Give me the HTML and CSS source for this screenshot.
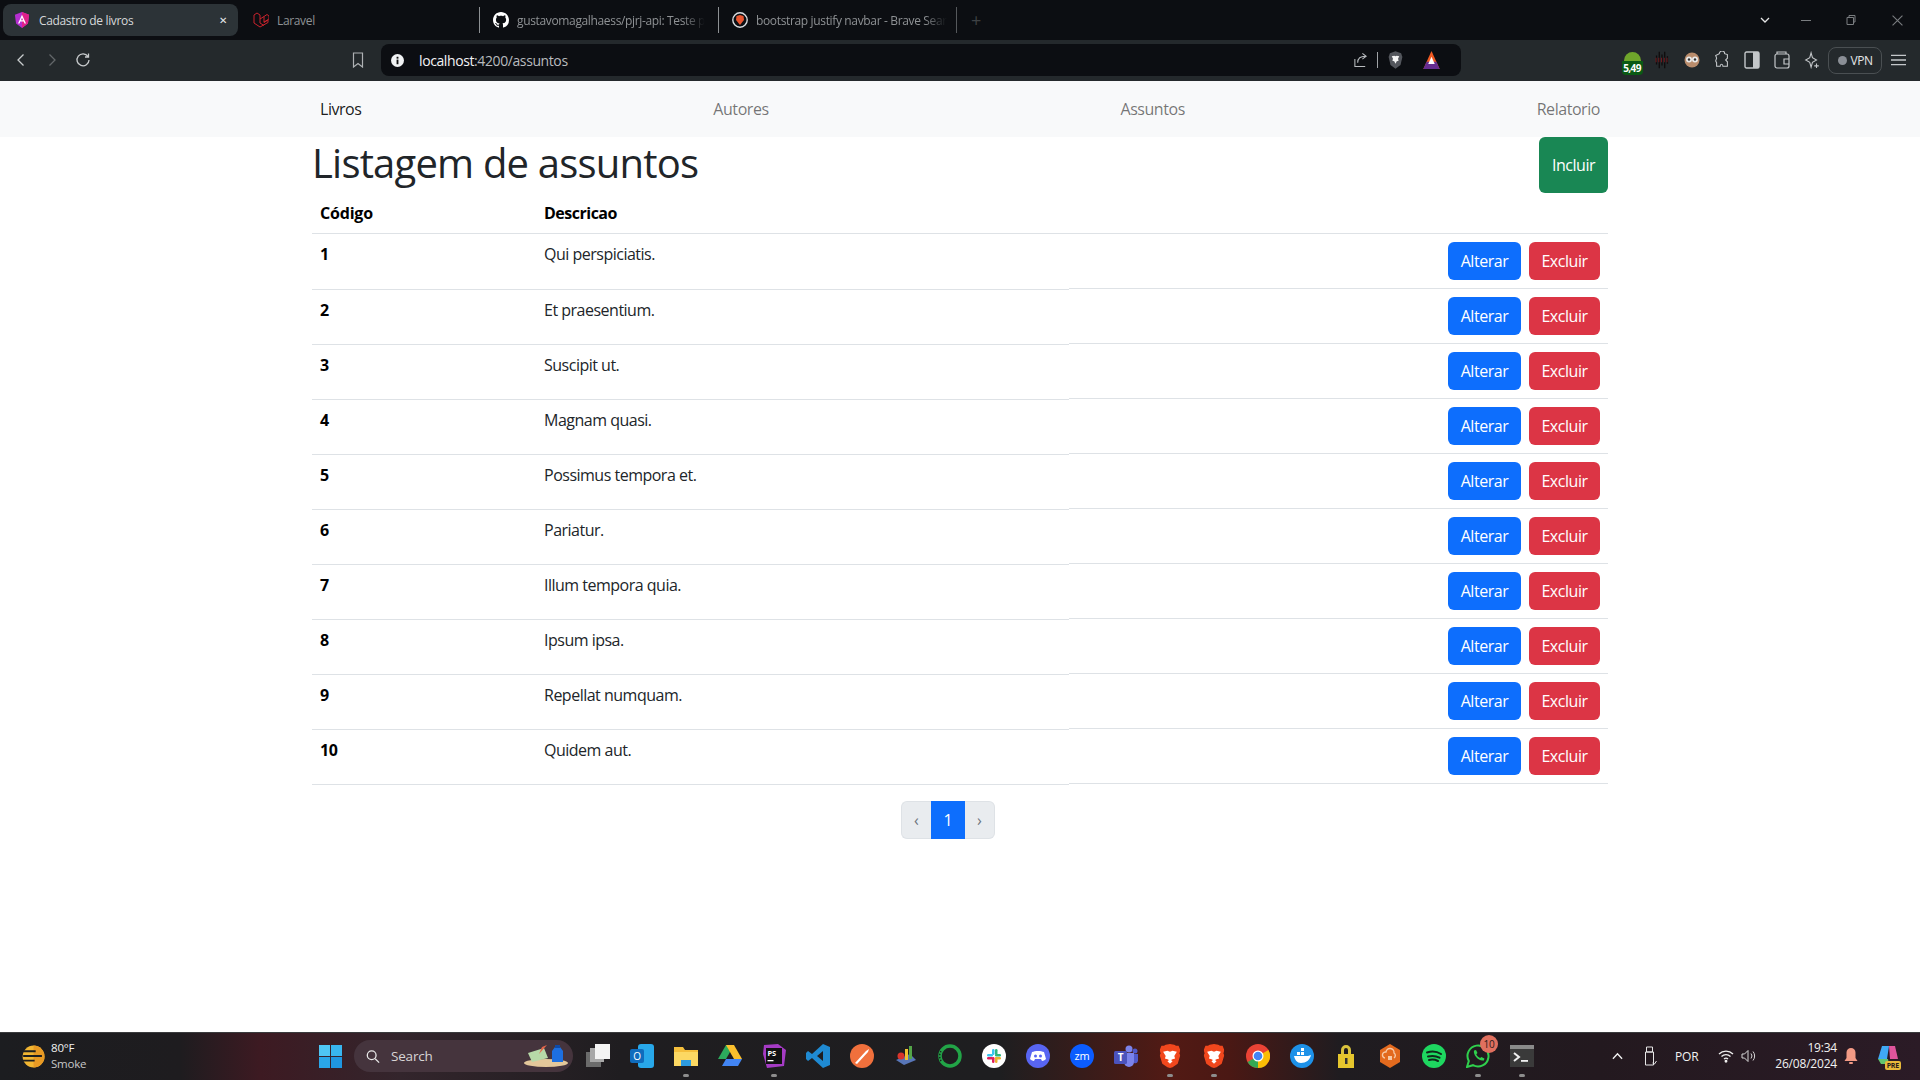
FILE: index.html
```html
<!DOCTYPE html>
<html lang="pt-BR">
<head>
    <meta charset="UTF-8">
    <meta name="viewport" content="width=device-width, initial-scale=1.0">
    <title>Cadastro de livros</title>
    <link rel="stylesheet" href="styles.css">
</head>
<body>

<svg class="defs" width="0" height="0">
    <defs>
        <symbol id="brave" viewBox="0 0 24 28">
            <path d="M12 0l5 1 2 1 3 0 2 5-1 4 1 2-3 10-6 4-3 1-3-1-6-4-3-10 1-2-1-4 2-5 3 0 2-1z" fill="#f1471d"/>
            <path d="M4 9l5-1 3 1 3-1 5 1-3 5 1 3-4 1-2 4-2-4-4-1 1-3z" fill="#fff"/>
            <path d="M9 20l3-2 3 2-3 3z" fill="#fff"/>
        </symbol>
    </defs>
</svg>

<div class="tabbar">
    <div class="tab tab-active">
        <svg class="tab-icon" viewBox="0 0 16 18"><path d="M8 0l8 3-1.300 10L8 18l-6.700-5L0 3z" fill="#b52ed0"/><path d="M8 0l8 3-1.300 10L8 18z" fill="#e0218a"/><path d="M8 3l4.500 10h-1.700l-.9-2.200H6.100L5.200 13H3.500zm0 3.500L6.800 9.400h2.400z" fill="#fff"/></svg>
        <span class="tab-title tab-grow">Cadastro de livros</span>
        <span class="tab-close">✕</span>
    </div>
    <div class="tab">
        <svg class="tab-icon" viewBox="0 0 16 16" fill="none" stroke="#c8232c" stroke-width="1"><path d="M1 3l3-2 3 2v8l4 2.500M1 3v8l6 4 8-4.500V8l-4 2.500M7 7l4-2.500M11 4.500v6M11 4.500l3-2 2 1.500v3l-5 3"/></svg>
        <span class="tab-title tab-dim">Laravel</span>
    </div>
    <div class="tab tab-sep">
        <svg class="tab-icon" viewBox="0 0 16 16"><path fill="#fff" d="M8 0C3.580 0 0 3.580 0 8c0 3.540 2.290 6.530 5.470 7.590.4.070.55-.17.55-.38 0-.19-.01-.82-.01-1.490-2.010.37-2.530-.49-2.690-.94-.09-.23-.48-.94-.82-1.130-.28-.15-.68-.52-.01-.53.63-.01 1.080.58 1.230.82.72 1.210 1.870.87 2.330.66.07-.52.28-.87.51-1.070-1.780-.2-3.640-.89-3.640-3.950 0-.87.31-1.590.82-2.150-.08-.2-.36-1.020.08-2.120 0 0 .67-.21 2.200.82.64-.18 1.320-.27 2-.27.68 0 1.360.09 2 .27 1.530-1.040 2.200-.82 2.200-.82.44 1.100.16 1.920.08 2.120.51.56.82 1.270.82 2.150 0 3.070-1.870 3.750-3.650 3.950.29.25.54.73.54 1.480 0 1.070-.01 1.930-.01 2.200 0 .21.15.46.55.38A8.013 8.013 0 0016 8c0-4.420-3.580-8-8-8z"/></svg>
        <span class="tab-title tab-dim tab-fade">gustavomagalhaess/pjrj-api: Teste p</span>
    </div>
    <div class="tab tab-sep tab-last">
        <svg class="tab-icon" viewBox="0 0 16 16"><circle cx="8" cy="8" r="7.200" fill="none" stroke="#d9dce0" stroke-width="1.400"/><path d="M8 3l3.500 1 .5 4-4 5-4-5 .5-4z" fill="#e8552f"/></svg>
        <span class="tab-title tab-dim tab-fade">bootstrap justify navbar - Brave Sear</span>
    </div>
    <span class="tab-plus">+</span>
    <div class="win-controls">
        <svg class="win-chevron" viewBox="0 0 10 6" fill="none" stroke="#e6e6e6" stroke-width="1.300"><path d="M1 1l4 4 4-4"/></svg>
        <span class="win-min"></span>
        <svg class="win-restore" viewBox="0 0 10 10" fill="none" stroke="#7a7d80" stroke-width="1"><path d="M1 2.500h6.500V9.500H1zM3 2.500V.5h6V7H7.500"/></svg>
        <svg class="win-x" viewBox="0 0 10 10" fill="none" stroke="#7a7d80" stroke-width="1"><path d="M.5.5l9 9M9.500.5l-9 9"/></svg>
    </div>
</div>

<div class="toolbar">
    <div class="tool-nav">
        <svg class="tool-btn" viewBox="0 0 16 16" fill="none" stroke="#c9ccce" stroke-width="1.300"><path d="M10.500 2.500L5 8l5.500 5.500"/></svg>
        <svg class="tool-btn" viewBox="0 0 16 16" fill="none" stroke="#63676a" stroke-width="1.300"><path d="M5.500 2.500L11 8l-5.500 5.500"/></svg>
        <svg class="tool-btn" viewBox="0 0 16 16" fill="none" stroke="#c9ccce" stroke-width="1.300"><path d="M13 4.500A6 6 0 1 0 14 8M13.500 1.500v3.500H10"/></svg>
    </div>
    <svg class="tool-bookmark" viewBox="0 0 12 16" fill="none" stroke="#aeb1b4" stroke-width="1.200"><path d="M1.500 1h9v14L6 11.500 1.500 15z"/></svg>
    <div class="address">
        <svg class="addr-info" viewBox="0 0 14 14"><circle cx="7" cy="7" r="7" fill="#f1f3f4"/><rect x="6" y="6" width="2" height="5" fill="#111"/><rect x="6" y="3" width="2" height="2" fill="#111"/></svg>
        <span class="addr-url"><span class="addr-host">localhost</span>:4200/assuntos</span>
        <svg class="addr-share" viewBox="0 0 16 16" fill="none" stroke="#b9bcbf" stroke-width="1.100"><path d="M2 7v8h11M5 11c0-5 3-7 8-7M10 1l4 3-4 3"/></svg>
        <span class="addr-divider"></span>
        <svg class="addr-shield" viewBox="0 0 24 28"><path d="M12 0l9 3 2 6-3 13-8 6-8-6L1 9l2-6z" fill="#53565c"/><path d="M6 8l4-1 2 1 2-1 4 1-2 4 1 3-3 1-2 4-2-4-3-1 1-3z" fill="#f5f5f5"/></svg>
        <svg class="addr-bat" viewBox="0 0 20 22"><path d="M10 0l10 22H0z" fill="#f15a22"/><path d="M0 22l4-9h12l4 9z" fill="#662d91"/><path d="M10 7l4 9H6z" fill="#fff"/></svg>
    </div>
    <div class="tool-ext">
        <div class="ext-badge">
            <span class="ext-dome"></span>
            <span class="ext-count">5,49</span>
        </div>
        <svg class="ext-icon ext-dark" viewBox="0 0 16 22"><path d="M2 6v10M5 2v18M8 5v12M11 2v18M14 7v8" stroke="#0f0b0c" stroke-width="1.400"/><path d="M1 11h14" stroke="#7a1a20" stroke-width="5" stroke-dasharray="1 2"/></svg>
        <svg class="ext-icon" viewBox="0 0 16 16"><circle cx="8" cy="8" r="7.500" fill="#b98c6c"/><circle cx="5" cy="7.500" r="3" fill="#e9e9e9"/><circle cx="11" cy="7.500" r="3" fill="#e9e9e9"/><circle cx="5" cy="7.500" r="1.200" fill="#333"/><circle cx="11" cy="7.500" r="1.200" fill="#333"/></svg>
        <svg class="ext-icon" viewBox="0 0 16 20" fill="none" stroke="#c4c7ca" stroke-width="1.200"><path d="M5 3a3 3 0 0 1 6 0l3 1v4l-2 2 2 2v5H9c0-3-3-3-3 0H2v-4l-1-2 1-3-1-3z"/></svg>
        <svg class="ext-icon" viewBox="0 0 16 18"><rect x="1" y="1" width="14" height="16" rx="1.500" fill="none" stroke="#c4c7ca" stroke-width="1.400"/><rect x="9" y="1" width="6" height="16" fill="#c4c7ca"/></svg>
        <svg class="ext-icon" viewBox="0 0 16 18" fill="none" stroke="#c4c7ca" stroke-width="1.200"><rect x="1" y="3" width="14" height="14" rx="2"/><path d="M3 3V1h9v2M15 8H10v5h5"/></svg>
        <svg class="ext-icon" viewBox="0 0 16 20" fill="none" stroke="#c4c7ca" stroke-width="1.200"><path d="M7 2l1.500 5.500L13 10l-4.500 2.500L7 18l-1.500-5.500L1 10l4.500-2.500z"/><path d="M13 14v5M10.500 16.500h5"/></svg>
        <div class="vpn"><span class="vpn-dot"></span>VPN</div>
        <svg class="ext-menu" viewBox="0 0 16 14" fill="none" stroke="#c4c7ca" stroke-width="1.400"><path d="M0 2h16M0 7h16M0 12h16"/></svg>
    </div>
</div>

<div class="page">
    <nav class="navbar">
        <div class="navbar-inner">
            <a class="nav-link nav-link-active">Livros</a>
            <a class="nav-link">Autores</a>
            <a class="nav-link">Assuntos</a>
            <a class="nav-link">Relatorio</a>
        </div>
    </nav>

    <div class="container">
        <div class="heading-row">
            <h1>Listagem de assuntos</h1>
            <button class="btn btn-success btn-incluir">Incluir</button>
        </div>

        <div class="table">
            <div class="row row-head">
                <div class="cell cell-code">Código</div>
                <div class="cell cell-desc">Descricao</div>
                <div class="cell cell-actions"></div>
            </div>
            <div class="row">
                <div class="cell cell-code">1</div>
                <div class="cell cell-desc">Qui perspiciatis.</div>
                <div class="cell cell-actions"><button class="btn btn-primary">Alterar</button><button class="btn btn-danger">Excluir</button></div>
            </div>
            <div class="row">
                <div class="cell cell-code">2</div>
                <div class="cell cell-desc">Et praesentium.</div>
                <div class="cell cell-actions"><button class="btn btn-primary">Alterar</button><button class="btn btn-danger">Excluir</button></div>
            </div>
            <div class="row">
                <div class="cell cell-code">3</div>
                <div class="cell cell-desc">Suscipit ut.</div>
                <div class="cell cell-actions"><button class="btn btn-primary">Alterar</button><button class="btn btn-danger">Excluir</button></div>
            </div>
            <div class="row">
                <div class="cell cell-code">4</div>
                <div class="cell cell-desc">Magnam quasi.</div>
                <div class="cell cell-actions"><button class="btn btn-primary">Alterar</button><button class="btn btn-danger">Excluir</button></div>
            </div>
            <div class="row">
                <div class="cell cell-code">5</div>
                <div class="cell cell-desc">Possimus tempora et.</div>
                <div class="cell cell-actions"><button class="btn btn-primary">Alterar</button><button class="btn btn-danger">Excluir</button></div>
            </div>
            <div class="row">
                <div class="cell cell-code">6</div>
                <div class="cell cell-desc">Pariatur.</div>
                <div class="cell cell-actions"><button class="btn btn-primary">Alterar</button><button class="btn btn-danger">Excluir</button></div>
            </div>
            <div class="row">
                <div class="cell cell-code">7</div>
                <div class="cell cell-desc">Illum tempora quia.</div>
                <div class="cell cell-actions"><button class="btn btn-primary">Alterar</button><button class="btn btn-danger">Excluir</button></div>
            </div>
            <div class="row">
                <div class="cell cell-code">8</div>
                <div class="cell cell-desc">Ipsum ipsa.</div>
                <div class="cell cell-actions"><button class="btn btn-primary">Alterar</button><button class="btn btn-danger">Excluir</button></div>
            </div>
            <div class="row">
                <div class="cell cell-code">9</div>
                <div class="cell cell-desc">Repellat numquam.</div>
                <div class="cell cell-actions"><button class="btn btn-primary">Alterar</button><button class="btn btn-danger">Excluir</button></div>
            </div>
            <div class="row">
                <div class="cell cell-code">10</div>
                <div class="cell cell-desc">Quidem aut.</div>
                <div class="cell cell-actions"><button class="btn btn-primary">Alterar</button><button class="btn btn-danger">Excluir</button></div>
            </div>
        </div>

        <div class="pagination">
            <span class="page-item page-prev">‹</span>
            <span class="page-item page-current">1</span>
            <span class="page-item page-next">›</span>
        </div>
    </div>
</div>

<div class="taskbar">
    <div class="weather">
        <svg class="weather-icon" viewBox="0 0 24 24"><circle cx="14" cy="12" r="10.500" fill="#f2b632"/><path d="M14 1.500a10.500 10.500 0 0 1 0 21z" fill="#e89a24"/><path d="M0 7h16M4 11.500h18M0 16h15" stroke="#1d1e20" stroke-width="1.800"/></svg>
        <div class="weather-text">
            <span>80°F</span>
            <span class="weather-sub">Smoke</span>
        </div>
    </div>
    <div class="task-cell task-start">
        <svg class="win-logo" viewBox="0 0 24 24"><rect width="11.500" height="11.500" fill="#4fc6f4"/><rect x="12.500" width="11.500" height="11.500" fill="#38b6ef"/><rect y="12.500" width="11.500" height="11.500" fill="#2aa6e8"/><rect x="12.500" y="12.500" width="11.500" height="11.500" fill="#1f96e0"/></svg>
    </div>
    <div class="search">
        <svg class="search-icon" viewBox="0 0 16 16" fill="none" stroke="#e8e8e8" stroke-width="1.500"><circle cx="6.500" cy="6.500" r="5"/><path d="M10.500 10.500L15 15"/></svg>
        <span class="search-text">Search</span>
        <svg class="search-art" viewBox="0 0 44 22"><ellipse cx="22" cy="18" rx="22" ry="4" fill="#e3c79a"/><path d="M4 8l16-5 4 10-16 4z" fill="#b7d9a8"/><path d="M18 2l5-2-8 9z" fill="#e5664b"/><path d="M31 2h5l3 4v11h-11V6z" fill="#1d6fe0"/><rect x="31" y="0" width="5" height="3" fill="#0f4aa8"/></svg>
    </div>
    <div class="task-icons">
        <div class="task-cell"><svg class="task-icon" viewBox="0 0 24 24"><rect y="8" width="15" height="15" fill="#6b6b6b"/><rect x="4" y="4" width="14" height="14" fill="#a8a8a8"/><rect x="9" y="0" width="15" height="15" fill="#f4f4f4"/></svg></div>
        <div class="task-cell"><svg class="task-icon" viewBox="0 0 24 24"><rect x="8" y="0" width="16" height="24" rx="3" fill="#28a8ea"/><rect x="0" y="5" width="14" height="14" rx="2" fill="#0f6cbd"/><text x="7" y="16" class="icon-text" font-size="10" fill="#fff" text-anchor="middle">O</text></svg></div>
        <div class="task-cell task-running"><svg class="task-icon" viewBox="0 0 24 24"><path d="M0 3h9l2 3h13v4H0z" fill="#f5bf3c"/><path d="M0 8h24v14H0z" fill="#fcd863"/><rect x="7" y="16" width="10" height="6" fill="#2d9ade"/></svg></div>
        <div class="task-cell"><svg class="task-icon" viewBox="0 0 24 22"><path d="M8 0h8L8 14H0z" fill="#2cab5c"/><path d="M8 0h8l8 14h-8z" fill="#fbc02d"/><path d="M4 21L8 14h16l-4 7z" fill="#4285f4"/></svg></div>
        <div class="task-cell task-running"><svg class="task-icon" viewBox="0 0 24 24"><path d="M2 1l14-1 8 6-2 16-17 2-4-14z" fill="#a53bc4"/><rect x="4" y="4" width="16" height="16" fill="#111"/><text x="5.500" y="12" class="icon-text" font-size="7.500" font-weight="700" fill="#fff">PS</text><rect x="5.500" y="16" width="6" height="1.300" fill="#fff"/></svg></div>
        <div class="task-cell"><svg class="task-icon" viewBox="0 0 24 24"><path d="M17 0l7 3v18l-7 3-11-10-4 3-2-2v-6l2-2 4 3zM17 7l-6 5 6 5z" fill="#1f8ad2"/></svg></div>
        <div class="task-cell"><svg class="task-icon" viewBox="0 0 24 24"><circle cx="12" cy="12" r="12" fill="#f0703c"/><path d="M5 19L16 7l3-2-1 3L7 20z" fill="#fff"/></svg></div>
        <div class="task-cell"><svg class="task-icon" viewBox="0 0 24 24"><path d="M2 16l14-6 6 6-12 5z" fill="#5876b8"/><circle cx="7" cy="12" r="3.500" fill="#d9342b"/><rect x="11" y="5" width="3" height="11" fill="#f2c230"/><rect x="15" y="2" width="3" height="13" fill="#53a548"/></svg></div>
        <div class="task-cell"><svg class="task-icon" viewBox="0 0 24 24" fill="none"><circle cx="12" cy="12" r="10" stroke="#22a447" stroke-width="3.500"/><path d="M3 7a10 10 0 0 0 0 10" stroke="#1d1e20" stroke-width="1.500" stroke-dasharray="1.500 1.500"/></svg></div>
        <div class="task-cell"><svg class="task-icon" viewBox="0 0 24 24"><circle cx="12" cy="12" r="12" fill="#fff"/><rect x="5" y="10" width="6" height="2.500" rx="1.200" fill="#36c5f0"/><rect x="10" y="5" width="2.500" height="6" rx="1.200" fill="#36c5f0"/><rect x="13" y="5" width="2.500" height="6" rx="1.200" fill="#2eb67d"/><rect x="13" y="10" width="6" height="2.500" rx="1.200" fill="#2eb67d"/><rect x="13" y="13" width="6" height="2.500" rx="1.200" fill="#ecb22e"/><rect x="13" y="13" width="2.500" height="6" rx="1.200" fill="#ecb22e"/><rect x="5" y="13" width="6" height="2.500" rx="1.200" fill="#e01e5a"/><rect x="10" y="13" width="2.500" height="6" rx="1.200" fill="#e01e5a"/></svg></div>
        <div class="task-cell"><svg class="task-icon" viewBox="0 0 24 24"><circle cx="12" cy="12" r="12" fill="#5865f2"/><path d="M6 8c3-1.500 9-1.500 12 0l2 7c-1 1-3 2-4 2l-1-2H9l-1 2c-1 0-3-1-4-2z" fill="#fff"/><circle cx="9.500" cy="12" r="1.500" fill="#5865f2"/><circle cx="14.500" cy="12" r="1.500" fill="#5865f2"/></svg></div>
        <div class="task-cell"><svg class="task-icon" viewBox="0 0 24 24"><circle cx="12" cy="12" r="12" fill="#0b5cff"/><text x="12" y="16" class="icon-text" font-size="11" fill="#fff" text-anchor="middle">zm</text></svg></div>
        <div class="task-cell"><svg class="task-icon" viewBox="0 0 24 24"><circle cx="15" cy="5" r="3.500" fill="#7b83eb"/><circle cx="21" cy="7" r="2.500" fill="#5059c9"/><path d="M10 9h10v9a5 5 0 0 1-10 0z" fill="#7b83eb"/><path d="M20 10h4v7a3 3 0 0 1-4 2z" fill="#5059c9"/><rect x="0" y="7" width="13" height="13" rx="1.500" fill="#4b53bc"/><text x="6.500" y="17" class="icon-text" font-size="10" font-weight="700" fill="#fff" text-anchor="middle">T</text></svg></div>
        <div class="task-cell task-running"><svg class="task-icon" viewBox="0 0 24 28"><use href="#brave"/></svg></div>
        <div class="task-cell task-running"><svg class="task-icon" viewBox="0 0 24 28"><use href="#brave"/></svg></div>
        <div class="task-cell"><svg class="task-icon" viewBox="0 0 24 24"><circle cx="12" cy="12" r="12" fill="#ea4335"/><path d="M12 12L1.600 18A12 12 0 0 0 12 24c3 0 6-1 8-3z" fill="#34a853"/><path d="M12 0a12 12 0 0 1 10.400 18L12 12V0z" fill="#fbbc05" transform="rotate(60 12 12)"/><circle cx="12" cy="12" r="5.500" fill="#fff"/><circle cx="12" cy="12" r="4.300" fill="#4285f4"/></svg></div>
        <div class="task-cell"><svg class="task-icon" viewBox="0 0 24 24"><circle cx="12" cy="12" r="12" fill="#1d91e8"/><path d="M4 12h14c1 0 2-1 3-1-1 5-5 8-10 8-4 0-6-3-7-7z" fill="#fff"/><rect x="7" y="8" width="3" height="3" fill="#fff"/><rect x="11" y="8" width="3" height="3" fill="#fff"/><rect x="11" y="4" width="3" height="3" fill="#fff"/></svg></div>
        <div class="task-cell"><svg class="task-icon" viewBox="0 0 24 24"><path d="M7 11V6a5 5 0 0 1 10 0v5h-3V6a2 2 0 0 0-4 0v5z" fill="#d9c23c"/><rect x="4" y="10" width="16" height="14" fill="#e6c62d"/><rect x="11" y="14" width="2.500" height="6" fill="#333"/></svg></div>
        <div class="task-cell"><svg class="task-icon" viewBox="0 0 24 24"><path d="M12 0l10 6v12l-10 6-10-6V6z" fill="#e36a1e"/><path d="M7 14a3 3 0 0 1 1-6 4 4 0 0 1 8 1 3 3 0 0 1 0 5" fill="none" stroke="#f7c9a5" stroke-width="1.400"/><rect x="10" y="12" width="4" height="4" fill="#f7c9a5"/></svg></div>
        <div class="task-cell"><svg class="task-icon" viewBox="0 0 24 24" fill="none"><circle cx="12" cy="12" r="12" fill="#1ed760"/><path d="M5 8.500c5-1.500 10-1 14 1.500M6 12.500c4-1 8-.7 11.500 1.200M7 16c3-.7 6-.5 9 1" stroke="#10281a" stroke-width="2" stroke-linecap="round"/></svg></div>
        <div class="task-cell task-running">
            <svg class="task-icon" viewBox="0 0 24 24" fill="none"><path d="M1 23l1.800-6A10.500 10.500 0 1 1 7 21.200z" stroke="#2fd04d" stroke-width="2"/><path d="M8 6.500l2-.5 1.500 3-1.200 1.300c.8 1.800 2 3 3.800 3.800l1.300-1.200 3 1.500-.5 2c-5 1.500-11-5.500-9.900-9.900z" fill="#2fd04d"/></svg>
            <span class="task-badge">10</span>
        </div>
        <div class="task-cell task-running"><svg class="task-icon" viewBox="0 0 24 24"><rect width="24" height="22" y="1" fill="#3a3a3a"/><rect width="24" height="4" y="1" fill="#8a8a8a"/><path d="M4 9l5 4-5 4" fill="none" stroke="#f0f0f0" stroke-width="2"/><rect x="11" y="16" width="7" height="1.800" fill="#f0f0f0"/></svg></div>
    </div>
    <div class="tray">
        <svg class="tray-chevron" viewBox="0 0 12 8" fill="none" stroke="#f0f0f0" stroke-width="1.500"><path d="M1 7l5-5.500L11 7"/></svg>
        <svg class="tray-usb" viewBox="0 0 12 20" fill="none" stroke="#e6e6e6" stroke-width="1"><path d="M2 1h6v5H2zM1 6h8v13H1zM8 17l2 1 2-3"/></svg>
        <span class="tray-lang">POR</span>
        <svg class="tray-wifi" viewBox="0 0 16 14" fill="none" stroke="#f0f0f0" stroke-width="1.300"><path d="M1 5a10 10 0 0 1 14 0M3.500 7.500a6.500 6.500 0 0 1 9 0M6 10a3 3 0 0 1 4 0"/><circle cx="8" cy="12.300" r=".8" fill="#f0f0f0"/></svg>
        <svg class="tray-sound" viewBox="0 0 16 14" fill="none" stroke="#d8d8d8" stroke-width="1"><path d="M1 5h2.500L7 1.500v11L3.500 9H1zM10 4.500a4 4 0 0 1 0 5M12 2.500a7 7 0 0 1 0 9" /></svg>
        <div class="clock">
            <span>19:34</span>
            <span>26/08/2024</span>
        </div>
        <svg class="tray-bell" viewBox="0 0 14 16"><path d="M7 0a4.500 4.500 0 0 1 4.500 4.500V10l2 3H.5l2-3V4.500A4.500 4.500 0 0 1 7 0z" fill="#f39a85"/><rect x="5" y="14" width="4" height="2" rx="1" fill="#f39a85"/></svg>
        <div class="copilot">
            <svg class="copilot-icon" viewBox="0 0 24 24"><path d="M6 3h7l-2 13H2z" fill="#3fa9f5"/><path d="M13 3h6l3 13h-8z" fill="#e0559c"/><path d="M2 16l3 5h8l-1-5z" fill="#62c46f"/></svg>
            <span class="copilot-pre">PRE</span>
        </div>
    </div>
</div>

</body>
</html>
```

FILE: styles.css
```css
body {
    font-family: "Open Sans", "Noto Sans", sans-serif;
    margin: 0;
    padding: 0;
    height: 1080px;
    width: 1920px;
    overflow: hidden;
    background-color: white;
    display: flex;
    flex-direction: column;
    color: #212529;
}
.defs {
    position: absolute;
}
.icon-text {
    font-family: "Open Sans", sans-serif;
}

/* browser window */
.tabbar {
    height: 40px;
    background-color: #0c0e12;
    display: flex;
    align-items: center;
    padding-left: 3px;
    font-size: 12px;
    letter-spacing: -0.35px;
    color: #d6d8da;
    flex-shrink: 0;
}
.tab {
    width: 239px;
    height: 32px;
    box-sizing: border-box;
    display: flex;
    align-items: center;
    padding-left: 13px;
    flex-shrink: 0;
    white-space: nowrap;
}
.tab-active {
    width: 235px;
    margin-right: 2px;
    padding-left: 11px;
    background-color: #2c3337;
    border-radius: 8px;
}
.tab-sep {
    border-left: 1px solid #8d9093;
    height: 26px;
}
.tab-last {
    width: 239px;
    border-right: 1px solid #55585b;
}
.tab-icon {
    width: 16px;
    height: 16px;
    margin-right: 8px;
    flex-shrink: 0;
}
.tab-active .tab-icon {
    margin-right: 9px;
}
.tab-grow {
    flex-grow: 1;
}
.tab-dim {
    color: #8f9295;
}
.tab-fade {
    -webkit-mask-image: linear-gradient(90deg, #000 88%, transparent 100%);
    mask-image: linear-gradient(90deg, #000 88%, transparent 100%);
}
.tab-close {
    font-size: 10px;
    margin-right: 11px;
    color: #e6e8ea;
}
.tab-plus {
    margin-left: 14px;
    font-size: 18px;
    color: #3e4144;
}
.win-controls {
    margin-left: auto;
    display: flex;
    align-items: center;
}
.win-chevron {
    width: 10px;
    height: 6px;
    margin-right: 31px;
}
.win-min {
    width: 10px;
    height: 1px;
    background-color: #7a7d80;
    margin-right: 35px;
}
.win-restore {
    width: 10px;
    height: 12px;
    margin-right: 36px;
}
.win-x {
    width: 11px;
    height: 11px;
    margin-right: 17px;
}

.toolbar {
    height: 41px;
    box-sizing: border-box;
    padding-bottom: 1px;
    background-color: #24292c;
    display: flex;
    align-items: center;
    flex-shrink: 0;
}
.tool-nav {
    display: flex;
    gap: 15px;
    padding-left: 13px;
    width: 348px;
    box-sizing: border-box;
}
.tool-btn {
    width: 16px;
    height: 16px;
}
.tool-bookmark {
    width: 12px;
    height: 16px;
    margin-right: 17px;
    margin-left: 4px;
}
.address {
    width: 1080px;
    height: 32px;
    background-color: #0c0e12;
    border-radius: 8px;
    display: flex;
    align-items: center;
    padding-left: 10px;
    box-sizing: border-box;
    font-size: 14px;
    letter-spacing: -0.4px;
    color: #b8bbbe;
}
.addr-info {
    width: 13px;
    height: 13px;
    margin-right: 15px;
}
.addr-host {
    color: #f2f3f4;
}
.addr-share {
    width: 15px;
    height: 16px;
    margin-left: auto;
}
.addr-divider {
    width: 1px;
    height: 16px;
    background-color: #a0a3a6;
    margin-left: 9px;
    margin-right: 10px;
}
.addr-shield {
    width: 15px;
    height: 18px;
    margin-right: 20px;
}
.addr-bat {
    width: 17px;
    height: 18px;
    margin-right: 21px;
}
.tool-ext {
    display: flex;
    align-items: center;
    flex-grow: 1;
    padding-left: 161px;
}
.ext-badge {
    width: 20px;
    height: 25px;
    margin-top: 8px;
    margin-right: 12px;
    display: flex;
    flex-direction: column;
    align-items: center;
}
.ext-dome {
    width: 17px;
    height: 9px;
    background-color: #6fa52b;
    border-radius: 9px 9px 0 0;
}
.ext-count {
    width: 21px;
    height: 14px;
    background-color: #0a5a14;
    border-radius: 0 0 4px 4px;
    font-size: 10px;
    font-weight: 700;
    line-height: 14px;
    letter-spacing: -0.6px;
    text-align: center;
    color: white;
}
.ext-icon {
    width: 16px;
    height: 18px;
    margin-right: 14px;
}
.ext-dark {
    height: 20px;
}
.vpn {
    width: 54px;
    height: 27px;
    box-sizing: border-box;
    border: 1px solid #4a4f52;
    border-radius: 8px;
    display: flex;
    align-items: center;
    justify-content: center;
    gap: 4px;
    font-size: 12px;
    letter-spacing: -0.5px;
    color: #e4e6e8;
    margin-left: -6px;
    flex-shrink: 0;
}
.vpn-dot {
    width: 9px;
    height: 9px;
    border-radius: 50%;
    background-color: #8b8f96;
}
.ext-menu {
    width: 15px;
    height: 14px;
    margin-left: 9px;
}

/* page */
.page {
    flex-grow: 1;
    background-color: white;
}
.navbar {
    height: 56px;
    background-color: #f8f9fa;
}
.navbar-inner {
    width: 1296px;
    height: 100%;
    margin: 0 auto;
    display: flex;
    justify-content: space-between;
    align-items: center;
}
.nav-link {
    padding: 0 8px;
    font-size: 16px;
    letter-spacing: -0.45px;
    color: rgba(0, 0, 0, 0.55);
}
.nav-link-active {
    color: rgba(0, 0, 0, 0.9);
}
.container {
    width: 1296px;
    margin: 0 auto;
}
.heading-row {
    display: flex;
    justify-content: space-between;
    height: 56px;
}
h1 {
    margin: 0;
    font-size: 40px;
    font-weight: 500;
    line-height: 52px;
    letter-spacing: -0.8px;
}
.btn {
    border: none;
    border-radius: 6px;
    color: white;
    height: 38px;
    padding: 0;
    font-family: inherit;
    font-size: 16px;
    letter-spacing: -0.45px;
}
.btn-success {
    background-color: #198754;
}
.btn-primary {
    background-color: #0d6efd;
    width: 73px;
}
.btn-danger {
    background-color: #dc3545;
    width: 71px;
}
.btn-incluir {
    height: 56px;
    width: 69px;
}

.row {
    display: flex;
    height: 55px;
    box-sizing: border-box;
    color: #212529;
    font-size: 16px;
    letter-spacing: -0.5px;
}
.row-head {
    height: 41px;
    font-weight: 700;
    color: #000;
}
.cell {
    box-sizing: border-box;
    padding: 8px;
    line-height: 24px;
    border-bottom: 1px solid #dee2e6;
}
.cell-code {
    width: 224px;
    font-weight: 700;
    color: #000;
    box-shadow: 0 1px 0 #dee2e6;
    border-bottom-color: transparent;
}
.cell-desc {
    width: 533px;
    box-shadow: 0 1px 0 #dee2e6;
    border-bottom-color: transparent;
}
.cell-actions {
    width: 539px;
    display: flex;
    justify-content: flex-end;
    gap: 8px;
}
.row-head .cell {
    box-shadow: none;
    border-bottom-color: #dee2e6;
}
.row-head .cell-code {
    letter-spacing: -0.2px;
}
.row + .row + .row .cell-code,
.row + .row + .row .cell-desc {
    padding-top: 9px;
}

.pagination {
    margin-top: 17px;
    padding-right: 24px;
    display: flex;
    justify-content: center;
    font-size: 16px;
}
.page-item {
    height: 38px;
    width: 30px;
    display: flex;
    align-items: center;
    justify-content: center;
    background-color: #e9ecef;
    color: #6c757d;
    border: 1px solid #dee2e6;
    box-sizing: border-box;
}
.page-prev {
    border-radius: 6px 0 0 6px;
    border-right: none;
}
.page-next {
    border-radius: 0 6px 6px 0;
    border-left: none;
}
.page-current {
    width: 34px;
    background-color: #0d6efd;
    border-color: #0d6efd;
    color: white;
}

/* windows taskbar */
.taskbar {
    height: 48px;
    flex-shrink: 0;
    box-sizing: border-box;
    border-top: 1px solid #3a3b3d;
    padding-bottom: 1px;
    background: linear-gradient(90deg, #1c1d20 0, #1e1c1f 180px, #3d1a22 260px, #33252c 400px, #1f1d20 620px, #1e1e20 1000px, #521a14 1170px, #4a1814 1230px, #1f1c20 1340px, #23191f 1600px, #2b1b26 1920px);
    display: flex;
    align-items: center;
    color: #f2f2f2;
    font-size: 12px;
    letter-spacing: -0.2px;
}
.weather {
    width: 306px;
    display: flex;
    align-items: center;
    padding-left: 18px;
    box-sizing: border-box;
    flex-shrink: 0;
}
.weather-icon {
    width: 27px;
    height: 25px;
    margin-right: 6px;
}
.weather-text {
    display: flex;
    flex-direction: column;
    font-size: 11.500px;
    line-height: 16px;
}
.weather-sub {
    color: #c8c8c8;
}
.task-cell {
    width: 44px;
    height: 47px;
    display: flex;
    align-items: center;
    justify-content: center;
    flex-shrink: 0;
    position: relative;
}
.task-start {
    width: 48px;
}
.win-logo {
    width: 23px;
    height: 23px;
}
.search {
    width: 219px;
    height: 32px;
    flex-shrink: 0;
    border-radius: 16px;
    background-color: #45343d;
    margin-right: 3px;
    display: flex;
    align-items: center;
    padding-left: 12px;
    box-sizing: border-box;
}
.search-icon {
    width: 14px;
    height: 15px;
    margin-right: 11px;
}
.search-text {
    font-size: 13.500px;
    color: #d8d4d6;
}
.search-art {
    margin-left: auto;
    width: 44px;
    height: 24px;
    margin-right: 5px;
}
.task-icons {
    display: flex;
    flex-shrink: 0;
}
.task-icon {
    width: 24px;
    height: 24px;
}
.task-running::after {
    content: "";
    position: absolute;
    left: 19px;
    bottom: 3px;
    width: 6px;
    height: 3px;
    border-radius: 2px;
    background-color: #8d8d8d;
}
.task-badge {
    position: absolute;
    top: 2px;
    left: 24px;
    width: 18px;
    height: 18px;
    border-radius: 50%;
    background-color: #e0705f;
    color: #2a1a1a;
    font-size: 10px;
    line-height: 18px;
    text-align: center;
}
.tray {
    flex-grow: 1;
    display: flex;
    align-items: center;
    padding-left: 68px;
    font-size: 12px;
}
.tray-chevron {
    width: 11px;
    height: 8px;
    margin-right: 21px;
}
.tray-usb {
    width: 13px;
    height: 20px;
    margin-right: 18px;
}
.tray-lang {
    width: 24px;
    margin-right: 19px;
}
.tray-wifi {
    width: 16px;
    height: 14px;
    margin-right: 7px;
}
.tray-sound {
    width: 16px;
    height: 14px;
    margin-right: 10px;
}
.clock {
    display: flex;
    flex-direction: column;
    align-items: flex-end;
    width: 70px;
    line-height: 16px;
    font-size: 12px;
    margin-right: 7px;
}
.tray-bell {
    width: 14px;
    height: 16px;
    margin-right: 18px;
}
.copilot {
    position: relative;
    width: 24px;
    height: 26px;
}
.copilot-icon {
    width: 24px;
    height: 24px;
}
.copilot-pre {
    position: absolute;
    right: -1px;
    bottom: -1px;
    background-color: #e8b93a;
    color: #2a1a1a;
    font-size: 7px;
    font-weight: 700;
    padding: 0 2px;
    border-radius: 2px;
    line-height: 9px;
}
```
